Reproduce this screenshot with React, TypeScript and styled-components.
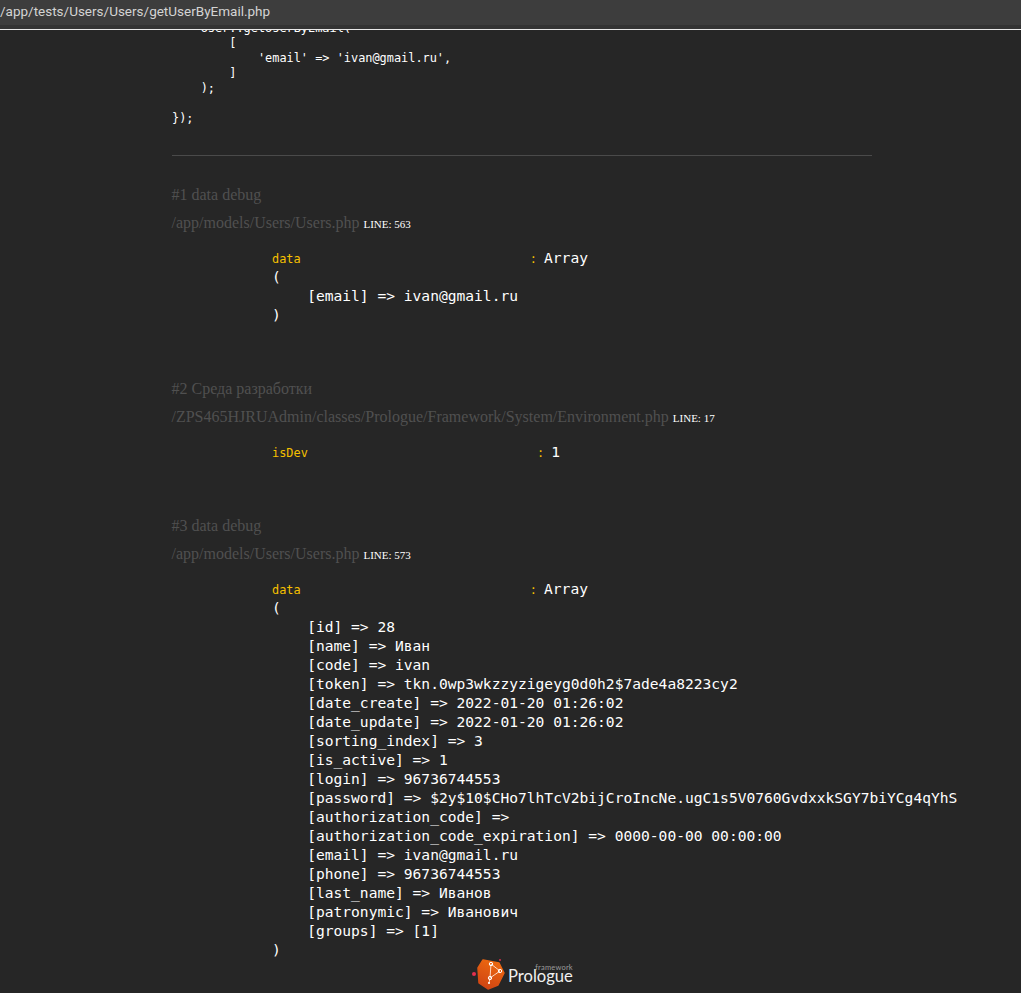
import React from 'react'
import styled, { createGlobalStyle } from 'styled-components'

const GlobalStyle = createGlobalStyle`
    html, body {
        margin: 0;
        padding: 0;
        background: #262626;
    }
`

const PATH_BAR_TEXT = '/app/tests/Users/Users/getUserByEmail.php'

const CODE_LINES = [
    "    User::getUserByEmail(",
    '        [',
    "            'email' => 'ivan@gmail.ru',",
    '        ]',
    '    );',
]

const USER_ROWS = `(
    [id] => 28
    [name] => Иван
    [code] => ivan
    [token] => tkn.0wp3wkzzyzigeyg0d0h2$7ade4a8223cy2
    [date_create] => 2022-01-20 01:26:02
    [date_update] => 2022-01-20 01:26:02
    [sorting_index] => 3
    [is_active] => 1
    [login] => 96736744553
    [password] => $2y$10$CHo7lhTcV2bijCroIncNe.ugC1s5V0760GvdxxkSGY7biYCg4qYhS
    [authorization_code] => 
    [authorization_code_expiration] => 0000-00-00 00:00:00
    [email] => ivan@gmail.ru
    [phone] => 96736744553
    [last_name] => Иванов
    [patronymic] => Иванович
    [groups] => [1]
)`

function DebugEntry(props: {
    title: string
    file: string
    line: number
    name: string
    gap: number
    value: string
    body?: string
}): JSX.Element {
    return (
        <Entry>
            <EntryTitle>{props.title}</EntryTitle>
            <EntryFile>
                {props.file} <LineLabel>LINE: {props.line}</LineLabel>
            </EntryFile>
            <Dump>
                <DumpKey>{props.name + ' '.repeat(props.gap)}: </DumpKey>
                {props.value}
                {props.body ? '\n' + props.body : ''}
            </Dump>
        </Entry>
    )
}

function Logo(): JSX.Element {
    return (
        <LogoWrap>
            <svg width="38" height="32" viewBox="0 0 38 32">
                <defs>
                    <linearGradient id="logoHex" x1="0.7" y1="0" x2="0.3" y2="1">
                        <stop offset="0" stopColor="#ee6a10" />
                        <stop offset="1" stopColor="#cf4413" />
                    </linearGradient>
                </defs>
                <circle cx="3" cy="16" r="2" fill="#e5304f" />
                <circle cx="29" cy="2" r="1" fill="#d8304a" />
                <path
                    d="M12 2 L28 5 L33 15 L27 27 L17 31 L8 25 L7 10 Z"
                    fill="url(#logoHex)"
                    stroke="url(#logoHex)"
                    strokeWidth="1.5"
                    strokeLinejoin="round"
                />
                <path d="M20 6 L29 13 L19 20 M20 6 L19 20 L18 25" fill="none" stroke="#ffd9c2" strokeWidth="1" />
                <circle cx="20" cy="6" r="1.7" fill="none" stroke="#fff" strokeWidth="1" />
                <circle cx="29" cy="13" r="1.7" fill="none" stroke="#fff" strokeWidth="1" />
                <circle cx="19" cy="20" r="1.7" fill="none" stroke="#fff" strokeWidth="1" />
                <circle cx="18" cy="25" r="1.1" fill="#fff" />
            </svg>
            <LogoText>
                <LogoSmall>framework</LogoSmall>
                <LogoName>Prologue</LogoName>
            </LogoText>
        </LogoWrap>
    )
}

export default function App(): JSX.Element {
    return (
        <Page>
            <GlobalStyle />
            <PathBar>{PATH_BAR_TEXT}</PathBar>
            <Content>
                <CodeBlock>{CODE_LINES.join('\n')}</CodeBlock>
                <ClosingCode>{'});'}</ClosingCode>
                <Divider />
                <DebugEntry
                    title="#1 data debug"
                    file="/app/models/Users/Users.php"
                    line={563}
                    name="data"
                    gap={32}
                    value="Array"
                    body={'(\n    [email] => ivan@gmail.ru\n)'}
                />
                <DebugEntry
                    title="#2 Среда разработки"
                    file="/ZPS465HJRUAdmin/classes/Prologue/Framework/System/Environment.php"
                    line={17}
                    name="isDev"
                    gap={32}
                    value="1"
                />
                <DebugEntry
                    title="#3 data debug"
                    file="/app/models/Users/Users.php"
                    line={573}
                    name="data"
                    gap={32}
                    value="Array"
                    body={USER_ROWS}
                />
            </Content>
            <Logo />
        </Page>
    )
}

const Page = styled.div`
    height: 993px;
    overflow: hidden;
    background: #262626;
    position: relative;
`

const PathBar = styled.header`
    position: absolute;
    top: 0;
    left: 0;
    right: 0;
    height: 25px;
    line-height: 23px;
    background: #3d3d3d;
    border-bottom: 4px solid #333333;
    box-shadow: 0 1px 0 #e8e8e8;
    color: #d4d4d4;
    font-family: 'Roboto', 'Liberation Sans', sans-serif;
    font-size: 13.5px;
    z-index: 2;
    white-space: nowrap;
`

const Content = styled.main`
    width: 700px;
    margin-left: 172px;
    padding-top: 21px;
    color: #ffffff;
`

const CodeBlock = styled.pre`
    margin: 0;
    font-family: 'DejaVu Sans Mono', monospace;
    font-size: 11.9px;
    line-height: 15px;
`

const ClosingCode = styled(CodeBlock)`
    margin-top: 15px;
`

const Divider = styled.hr`
    border: none;
    height: 1px;
    background: #4a4a4a;
    margin: 29px 0 0;
`

const Entry = styled.section`
    padding-top: 0;
`

const EntryTitle = styled.div`
    font-family: 'Liberation Serif', serif;
    font-size: 16px;
    line-height: 18px;
    color: #505050;
    margin: 0 0 0 -0.5px;
    ${Entry}:first-of-type & {
        margin-top: 30px;
    }
`

const EntryFile = styled.div`
    font-family: 'Liberation Serif', serif;
    font-size: 16px;
    line-height: 18px;
    color: #505050;
    margin: 10px 0 0 -0.5px;
`

const LineLabel = styled.span`
    font-size: 11px;
    color: #ffffff;
`

const Dump = styled.pre`
    margin: 15px 0 0 100px;
    padding-bottom: 56px;
    font-family: 'DejaVu Sans Mono', monospace;
    font-size: 14.6px;
    line-height: 19px;
    color: #ffffff;
`

const DumpKey = styled.span`
    font-size: 11.9px;
    line-height: 1;
    color: #f5c000;
`

const LogoWrap = styled.div`
    position: absolute;
    left: 471px;
    top: 958px;
    display: flex;
    align-items: center;
    z-index: 2;
`

const LogoText = styled.div`
    display: flex;
    flex-direction: column;
    align-items: flex-end;
    margin: -1px 0 0 -1px;
`

const LogoSmall = styled.span`
    font-family: 'Lato', sans-serif;
    font-size: 7.5px;
    line-height: 6px;
    letter-spacing: 0.2px;
    color: #9a9a9a;
`

const LogoName = styled.span`
    font-family: 'Lato', sans-serif;
    font-size: 16.6px;
    line-height: 14px;
    margin-top: -2px;
    color: #f0f0f0;
`
